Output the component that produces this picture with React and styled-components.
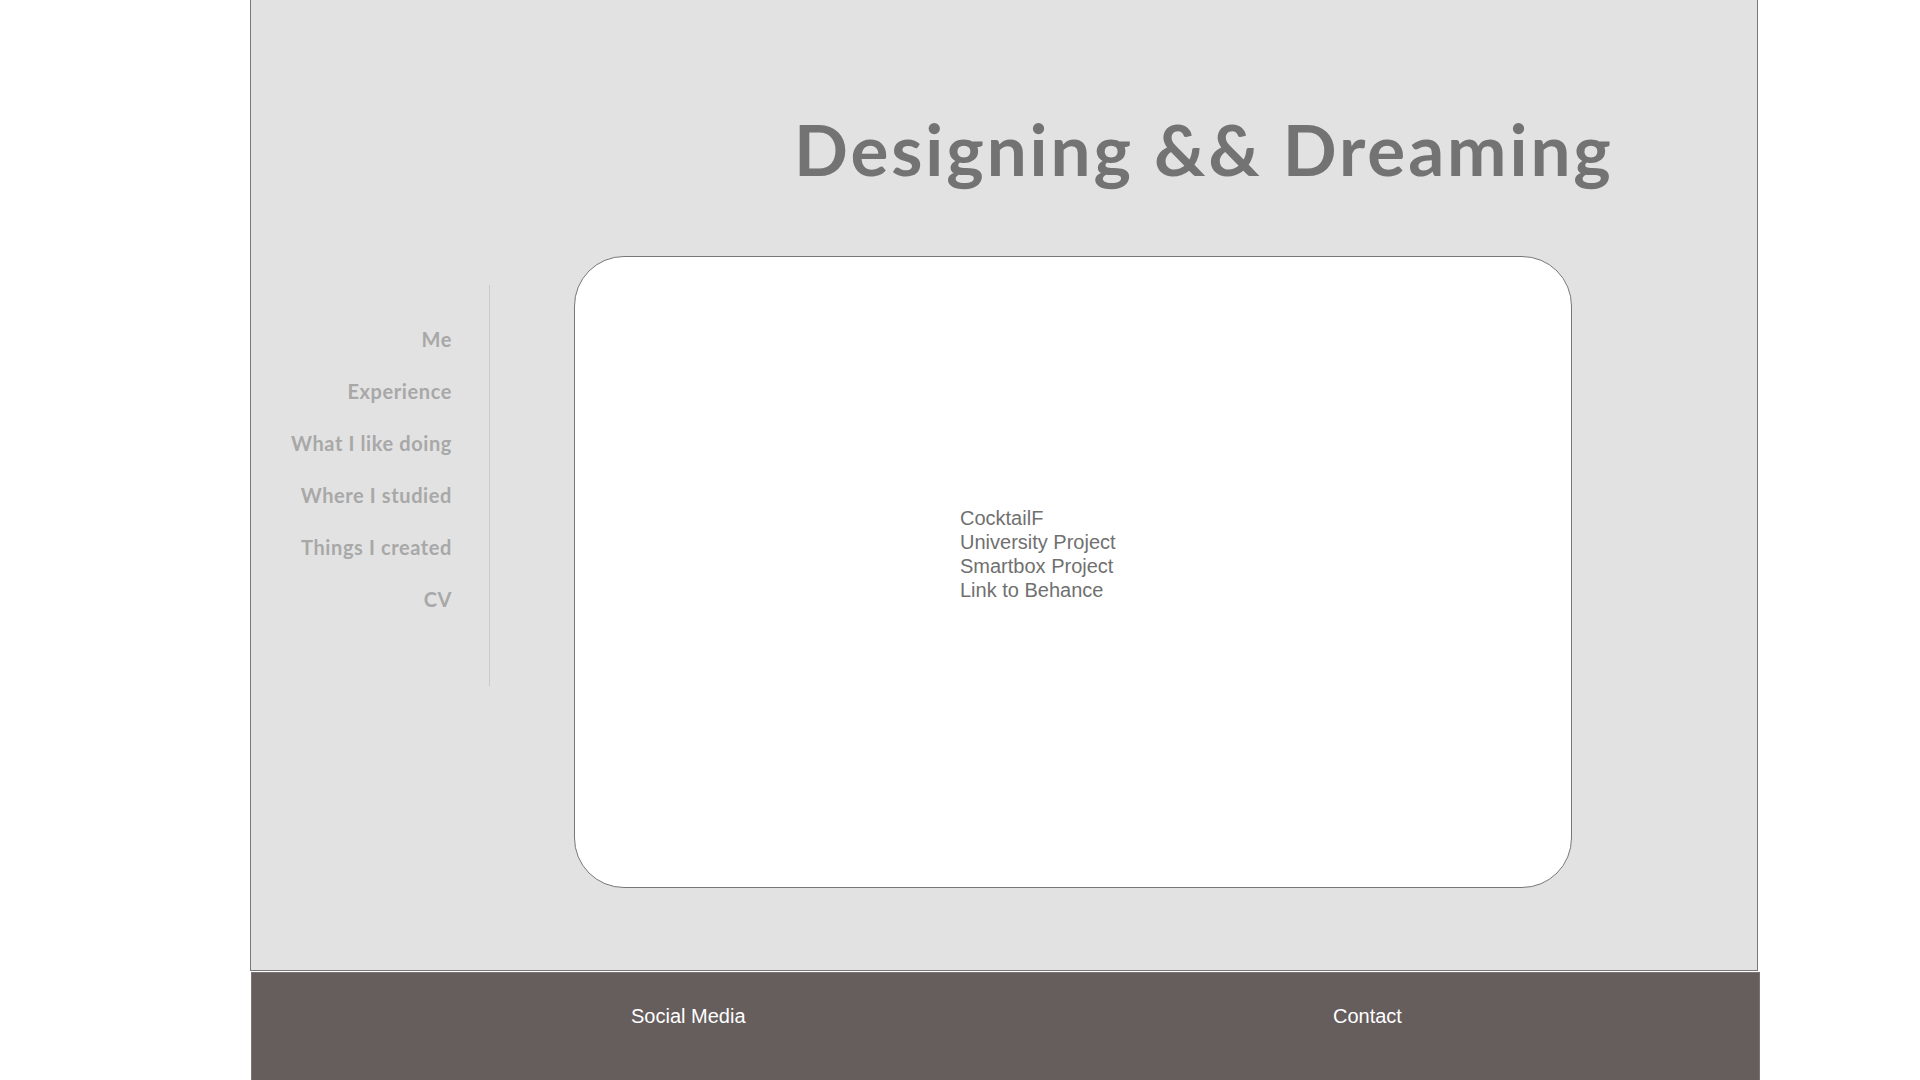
import React from "react";
import styled, { createGlobalStyle } from "styled-components";

const Global = createGlobalStyle`
  html, body { margin: 0; padding: 0; background: #ffffff; }
  body { font-family: "Liberation Sans", Arial, sans-serif; }
`;

const Page = styled.div`
  width: 1510px;
  margin-left: 250px;
  display: flex;
  flex-direction: column;
  gap: 1px;
`;

const Frame = styled.main`
  box-sizing: border-box;
  height: 971px;
  background: #e2e2e2;
  border: 1px solid #777777;
  border-top: none;
  width: 1508px;
  display: flex;
  flex-direction: column;
`;

const Title = styled.h1`
  margin: 0;
  padding: 107px 0 0 543px;
  height: 152px;
  box-sizing: border-box;
  font-family: Lato, "Noto Sans", sans-serif;
  font-weight: 700;
  font-size: 71px;
  line-height: 84px;
  letter-spacing: 2.9px;
  color: #737373;
  white-space: nowrap;
`;

const Body = styled.div`
  display: flex;
  align-items: flex-start;
  padding-top: 104px;
`;

const Nav = styled.nav`
  box-sizing: border-box;
  width: 239px;
  margin-top: 29px;
  height: 401px;
  border-right: 1px solid #c9c9c9;
  padding: 42px 37px 0 0;
  display: flex;
  flex-direction: column;
  align-items: flex-end;
  gap: 28px;
`;

const NavItem = styled.a`
  font-family: Lato, "Noto Sans", sans-serif;
  font-weight: 700;
  font-size: 20px;
  line-height: 24px;
  letter-spacing: 0.6px;
  color: #a8a8a8;
  text-decoration: none;
  white-space: nowrap;
`;

const Card = styled.section`
  box-sizing: border-box;
  margin-left: 84px;
  width: 998px;
  height: 632px;
  background: #ffffff;
  border: 1px solid #777777;
  border-radius: 50px;
  padding: 249px 0 0 385px;
  display: flex;
  flex-direction: column;
`;

const CardLine = styled.a`
  font-family: "Liberation Sans", Arial, sans-serif;
  font-size: 20px;
  line-height: 24px;
  color: #707070;
  text-decoration: none;
`;

const Footer = styled.footer`
  box-sizing: border-box;
  width: 1509px;
  height: 108px;
  margin-left: 1px;
  background: #665d5d;
  border: 1px solid #7a7474;
  border-bottom: none;
  display: flex;
  padding: 31px 0 0 379px;
`;

const FooterLink = styled.a`
  font-family: "Liberation Sans", Arial, sans-serif;
  font-size: 20px;
  line-height: 24px;
  color: #ffffff;
  text-decoration: none;
  width: ${(p) => p.$w || "auto"};
`;

const navItems = [
  "Me",
  "Experience",
  "What I like doing",
  "Where I studied",
  "Things I created",
  "CV",
];

const projects = [
  "CocktailF",
  "University Project",
  "Smartbox Project",
  "Link to Behance",
];

export default function App() {
  return (
    <>
      <Global />
      <Page>
        <Frame>
          <Title>Designing &amp;&amp; Dreaming</Title>
          <Body>
            <Nav>
              {navItems.map((n) => (
                <NavItem key={n}>{n}</NavItem>
              ))}
            </Nav>
            <Card>
              {projects.map((p) => (
                <CardLine key={p}>{p}</CardLine>
              ))}
            </Card>
          </Body>
        </Frame>
        <Footer>
          <FooterLink $w="702px">Social Media</FooterLink>
          <FooterLink>Contact</FooterLink>
        </Footer>
      </Page>
    </>
  );
}
